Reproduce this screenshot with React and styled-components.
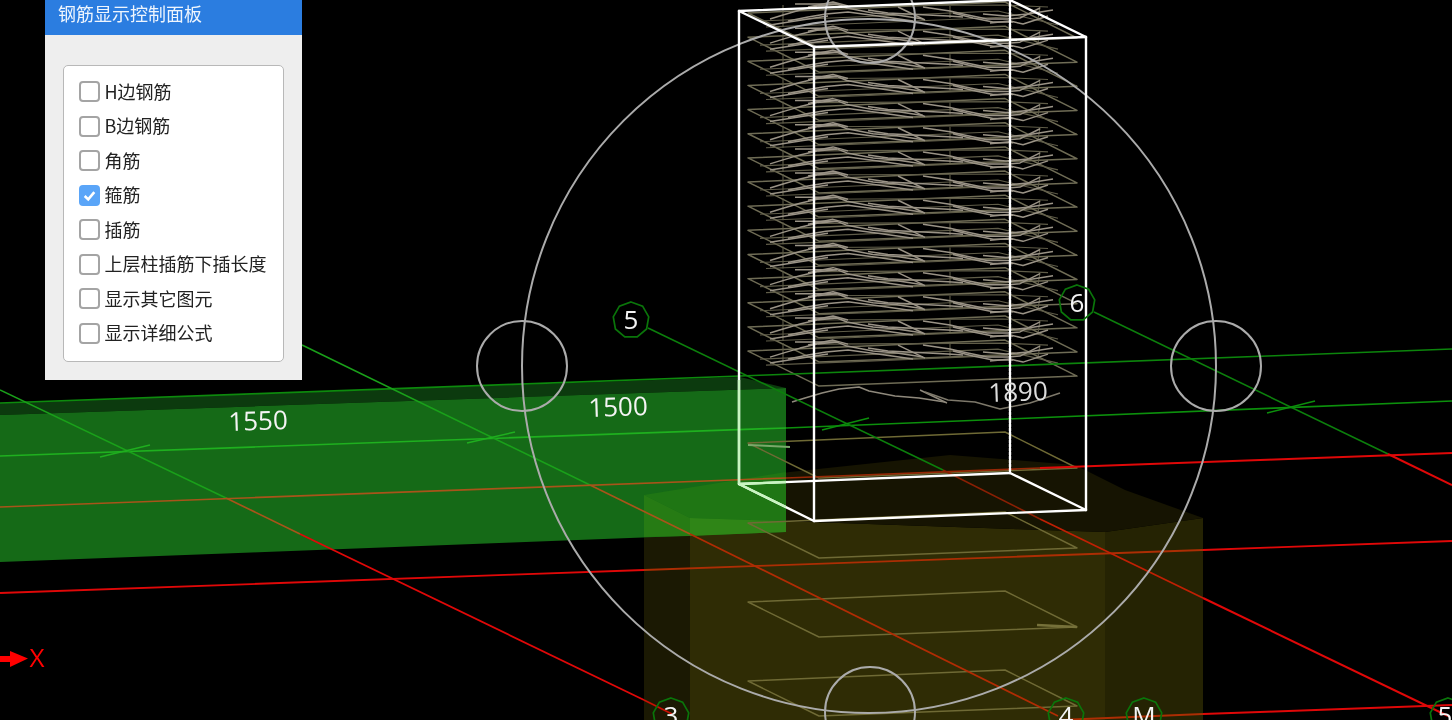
import React from 'react';
import styled, { createGlobalStyle } from 'styled-components';

const Global = createGlobalStyle`
  html, body { margin: 0; padding: 0; background: #000; overflow: hidden; }
`;
const Page = styled.div`
  position: relative; width: 1452px; height: 720px; overflow: hidden; background: #000;
`;
const Scene = styled.svg`
  display: block; width: 1452px; height: 720px; filter: blur(0.5px);
`;
const Label = styled.text`
  font-family: "Open Sans", "Noto Sans", sans-serif;
  font-size: ${p => p.$size || 26}px;
  fill: ${p => p.$color || '#f4f4f4'};
  text-anchor: middle;
  dominant-baseline: central;
`;
const Panel = styled.section`
  position: absolute; left: 45px; top: 0; width: 257px; height: 380px;
  display: flex; flex-direction: column; background: #eee;
  font-family: "Noto Sans CJK SC", "Noto Sans", sans-serif;
  filter: blur(0.4px);
`;
const Header = styled.header`
  height: 35px; flex: none; display: flex; align-items: center; padding: 0 0 10px 13px;
  box-sizing: border-box; background: #2b7de0; color: #eef5fd; font-size: 18px; line-height: 1;
`;
const Body = styled.div`
  flex: 1; padding: 30px 18px 18px; box-sizing: border-box; display: flex;
`;
const Card = styled.div`
  flex: 1; box-sizing: border-box; background: #fff; border: 1.5px solid #b8b8b8; border-radius: 5px;
  padding: 15.5px 0 0 15px; display: flex; flex-direction: column; gap: 14.5px;
`;
const Row = styled.label`
  display: flex; align-items: center; gap: 4.5px; height: 20px; color: #222; font-size: 18px; line-height: 18px;
  white-space: nowrap;
`;
const RowText = styled.span`
  display: block; margin-top: -2px;
`;
const Box = styled.span`
  width: 21px; height: 21px; box-sizing: border-box; flex: none; border-radius: 4px;
  border: ${p => (p.$on ? 'none' : '2px solid #a4a4a4')};
  background: ${p => (p.$on ? '#5aa5f8' : '#fff')};
  display: flex; align-items: center; justify-content: center;
`;

const items = [
  ['H边钢筋', false], ['B边钢筋', false], ['角筋', false], ['箍筋', true],
  ['插筋', false], ['上层柱插筋下插长度', false], ['显示其它图元', false], ['显示详细公式', false],
];

const pts = a => a.map(([x, y]) => `${x},${y}`).join(' ');
const shift = (a, x, y) => a.map(([dx, dy]) => [x + dx, y + dy]);

const outline = [[0, 0], [257, -11], [329, 25], [71, 35]];
const zig = [
  [[22, 6], [35, 2], [52, -3], [69, -7], [89, -9], [99, -5], [125, 0], [149, 2], [175, 6]],
  [[150, -6], [177, 7]],
  [[175, -6], [202, -2], [215, 1], [239, 6], [260, 6], [272, 5], [292, -5]],
  [[242, 10], [262, 8], [275, 11], [300, 3]],
  [[47, -9], [65, -9], [89, -9]],
  [[22, 12], [60, 6], [80, 3]],
  [[40, 8], [60, 4], [78, 1], [100, -1], [130, 3], [165, 8]],
  [[205, 0], [225, 5], [245, 9], [265, 9]],
  [[235, 1], [258, 3], [280, 1], [305, -3]],
  [[60, -6], [85, -11], [100, -7]],
  [[120, -3], [140, 0], [160, 1], [200, 3], [215, 4]],
];
const dim = [
  [[35, -8], [35, 14]],
  [[202, -7], [202, 5]],
  [[292, -6], [290, 6]],
  [[12, 8], [250, -2], [310, 12]],
  [[70, -7], [255, -8], [300, -6]],
  [[18, 14], [120, 10], [260, 4]],
];

const upperTips = Array.from({ length: 15 }, (_, i) => 13 + i * 24.15);
const lowerTips = [443, 523, 602, 681];
const hexes = [
  [631, 320, '5'], [1077, 303, '6'], [671, 716, '3'], [1066, 716, '4'], [1144, 716, 'M'], [1448, 716, '5'],
];
const nonagon = (cx, cy, r) =>
  Array.from({ length: 9 }, (_, i) => {
    const a = -Math.PI / 2 + (i * 2 * Math.PI) / 9;
    return [(cx + r * Math.cos(a)).toFixed(1), (cy + r * Math.sin(a)).toFixed(1)];
  });

const segs = [
  [0, 403, 740, 376, '#0d8a0d', 1.7], [740, 376, 1452, 349, '#0c850c', 1.7],
  [0, 456, 786, 428, '#1fb01f', 1.7], [786, 428, 1452, 401, '#0c900c', 1.7],
  [648, 328, 943, 470, '#0c7f0c', 1.6],
  [1094, 312, 1388, 454, '#0c7f0c', 1.6],
  [302, 345, 590, 485, '#1aa01a', 1.5],
  [0, 390, 226, 498, '#1aa01a', 1.5],
  [100, 457, 150, 445, '#1fae1f', 1.5], [467, 443, 515, 432, '#1fae1f', 1.5],
  [822, 430, 869, 418, '#0c8f0c', 1.5], [1267, 413, 1315, 401, '#0c8f0c', 1.5],
  [0, 507, 786, 478, '#a8541a', 1.7], [786, 478, 1040, 468, '#962806', 1.7], [1040, 468, 1452, 453, '#e00808', 2],
  [0, 593, 644, 570, '#e00808', 1.8], [644, 570, 1203, 550, '#ac2e04', 1.8], [1203, 550, 1452, 541, '#e00808', 1.8],
  [943, 470, 1040, 519, '#8a2004', 1.7], [1040, 519, 1203, 598, '#c02004', 1.8], [1203, 598, 1448, 716, '#e00808', 2],
  [1388, 454, 1452, 485, '#e00808', 2],
  [590, 485, 690, 534, '#a8541a', 1.7], [690, 534, 1058, 716, '#b02c04', 1.8],
  [226, 498, 300, 534, '#a8541a', 1.7], [300, 534, 644, 700, '#e00808', 1.8], [644, 700, 672, 714, '#c81004', 1.8],
  [1060, 720, 1203, 714, '#ac2e04', 2], [1203, 714, 1452, 705, '#e00808', 2],
];

const wire = [
  [739, 11, 1010, 0], [1010, 0, 1086, 37], [1086, 37, 814, 47], [814, 47, 739, 11],
  [739, 484, 1010, 473], [1010, 473, 1086, 510], [1086, 510, 814, 521], [814, 521, 739, 484],
  [739, 11, 739, 484], [814, 47, 814, 521], [1086, 37, 1086, 510],
];

function Stirrups() {
  return (
    <g fill="none" strokeLinejoin="round">
      {upperTips.map(y => (
        <g key={y}>
          <polygon points={pts(shift(outline, 748, y))} stroke="#6f6c55" strokeWidth="1.5" />
          {dim.map((l, i) => <polyline key={i} points={pts(shift(l, 748, y))} stroke="#5f5c48" strokeWidth="1.1" />)}
          {zig.map((l, i) => <polyline key={i} points={pts(shift(l, 748, y))} stroke="#9a9386" strokeWidth="1.5" />)}
        </g>
      ))}
      <g>
        {zig.slice(0, 2).map((l, i) => <polyline key={i} points={pts(shift(l, 770, 396))} stroke="#8f897c" strokeWidth="1.5" />)}
        <polyline points="925,392 948,400 975,402 1000,409 1030,403 1060,393" stroke="#7d786a" strokeWidth="1.4" />
      </g>
      {lowerTips.map(y => (
        <polygon key={y} points={pts(shift(outline, 748, y))} stroke="#6f6a35" strokeWidth="1.4" />
      ))}
      <polyline points="748,445 790,447" stroke="#7aa86a" strokeWidth="2" />
      <polyline points="1037,625 1077,627" stroke="#76713a" strokeWidth="2.4" />
    </g>
  );
}

export default function App() {
  return (
    <Page>
      <Global />
      <Scene viewBox="0 0 1452 720">
        <polygon points="644,495 690,518 690,720 644,720" fill="#1b1903" />
        <polygon points="690,518 1105,532 1105,720 690,720" fill="#2f2c05" />
        <polygon points="1105,532 1203,518 1203,720 1105,720" fill="#252303" />
        <polygon points="644,495 790,472 950,455 1075,465 1125,490 1203,518 1105,532 690,518" fill="#161402" />
        <polygon points="0,403 740,377 786,388 0,415" fill="#0c3a0e" />
        <polygon points="0,415 786,388 786,532 0,562" fill="#156a17" />
        <polygon points="644,495 786,472 786,521 690,518" fill="#1f7614" />
        <polygon points="644,495 690,518 690,536 644,537" fill="#267b14" />
        <polygon points="690,518 786,521 786,532 690,536" fill="#2f8517" />
        <Stirrups />
        {segs.map(([a, b, c, d, col, w], i) => (
          <line key={i} x1={a} y1={b} x2={c} y2={d} stroke={col} strokeWidth={w} />
        ))}
        <polygon points="0,656 10,656 10,651 28,658.5 10,667 10,662 0,662" fill="#f00" />
        <Label x="37" y="657" $size={26} $color="#f00">X</Label>
        <g fill="none" stroke="#ababab" strokeWidth="2">
          <circle cx="869" cy="366" r="347" />
          <circle cx="522" cy="366" r="45" />
          <circle cx="1216" cy="366" r="45" />
          <circle cx="870" cy="18" r="45" />
          <circle cx="870" cy="712" r="45" />
        </g>
        <g stroke="#fff" strokeWidth="2.4" strokeLinecap="round">
          {wire.map(([a, b, c, d], i) => <line key={i} x1={a} y1={b} x2={c} y2={d} />)}
          <line x1="1010" y1="0" x2="1010" y2="473" strokeDasharray="3 1" />
        </g>
        <g stroke="#c8f5c0" strokeWidth="2.4">
          <line x1="739" y1="380" x2="739" y2="484" />
          <line x1="739" y1="484" x2="786" y2="507" />
          <line x1="739" y1="484" x2="786" y2="482" />
        </g>
        {hexes.map(([x, y, t]) => (
          <polygon key={t + x} points={pts(nonagon(x, y, 18))} fill="none" stroke="#0a750a" strokeWidth="1.7" />
        ))}
        {hexes.map(([x, y, t]) => (
          <Label key={t + x} x={t === '5' && x > 1000 ? 1445 : x} y={y - 1} $size={26}>{t}</Label>
        ))}
        <Label x="258" y="420" transform="rotate(-2 258 420)">1550</Label>
        <Label x="618" y="406" transform="rotate(-2 618 406)">1500</Label>
        <Label x="1018" y="391" transform="rotate(-2 1018 391)" $color="#dcdcdc">1890</Label>
      </Scene>
      <Panel>
        <Header>钢筋显示控制面板</Header>
        <Body>
          <Card>
            {items.map(([t, on]) => (
              <Row key={t}>
                <Box $on={on}>
                  {on && (
                    <svg width="15" height="15" viewBox="0 0 14 14">
                      <path d="M2.5 7.5 L5.8 10.6 L11.5 3.8" fill="none" stroke="#fff" strokeWidth="2.4" />
                    </svg>
                  )}
                </Box>
                <RowText>{t}</RowText>
              </Row>
            ))}
          </Card>
        </Body>
      </Panel>
    </Page>
  );
}
